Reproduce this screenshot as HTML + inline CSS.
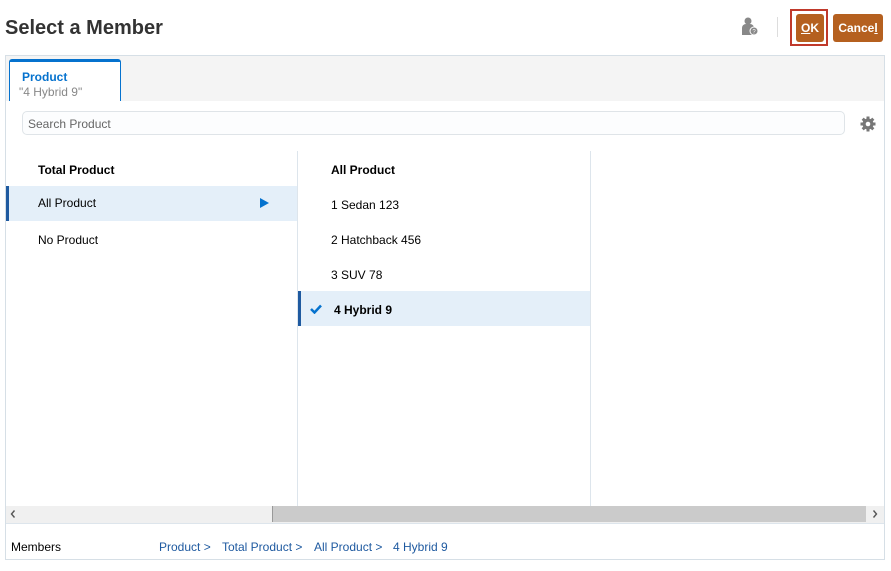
<!DOCTYPE html>
<html><head><style>
*{margin:0;padding:0;box-sizing:border-box}
body{width:891px;height:571px;background:#fff;font-family:"Liberation Sans",Arial,sans-serif;position:relative;overflow:hidden;color:#000}
.a{position:absolute}
.t{font-size:12px;white-space:nowrap}
.b{color:#1f5aa0}
</style></head><body>
<div class="a" style="left:5px;top:17px;font-size:20px;font-weight:bold;color:#333">Select a Member</div>
<svg class="a" style="left:741px;top:17px" width="19" height="20" viewBox="0 0 19 20"><circle cx="7" cy="4" r="3.5" fill="#888"/><path d="M1 18V11a4 4 0 0 1 4-4h4a4 4 0 0 1 4 4v7z" fill="#888"/><circle cx="13" cy="14" r="4.5" fill="#fff"/><circle cx="13" cy="14" r="3.5" fill="#888"/><text x="13" y="16.5" font-size="6" fill="#fff" text-anchor="middle" font-family="Liberation Sans">?</text></svg>
<div class="a" style="left:777px;top:17px;width:1px;height:20px;background:#ddd"></div>
<div class="a" style="left:790px;top:9px;width:38px;height:37px;border:2px solid #c0392b"></div>
<div class="a" style="left:796px;top:14px;width:28px;height:28px;background:#b5601f;border-radius:3px;color:#fff;font-weight:bold;font-size:12px;text-align:center;line-height:28px"><u>O</u>K</div>
<div class="a" style="left:833px;top:14px;width:50px;height:28px;background:#b5601f;border-radius:3px;color:#fff;font-weight:bold;font-size:12px;text-align:center;line-height:28px">Cance<u>l</u></div>
<div class="a" style="left:5px;top:55px;width:880px;height:505px;border:1px solid #d6dfe6"></div>
<div class="a" style="left:6px;top:56px;width:878px;height:45px;background:#f4f4f4"></div>
<div class="a" style="left:9px;top:59px;width:112px;height:42px;background:#fff;border:1px solid #0572ce;border-top:3px solid #0572ce;border-bottom:none;border-radius:3px 3px 0 0"></div>
<div class="a t" style="left:22px;top:70px;color:#0572ce;font-weight:bold">Product</div>
<div class="a t" style="left:19px;top:85px;color:#888">"4 Hybrid 9"</div>
<div class="a" style="left:22px;top:111px;width:823px;height:24px;border:1px solid #dfe4e8;border-radius:5px;background:#fcfdfe"></div>
<div class="a t" style="left:28px;top:117px;color:#666">Search Product</div>
<svg class="a" style="left:860px;top:116px" width="16" height="16" viewBox="0 0 16 16"><g fill="#777"><circle cx="8" cy="8" r="5.5"/><rect x="6.5" y="0.5" width="3" height="15"/><rect x="0.5" y="6.5" width="15" height="3"/><rect x="6.5" y="0.5" width="3" height="15" transform="rotate(45 8 8)"/><rect x="6.5" y="0.5" width="3" height="15" transform="rotate(-45 8 8)"/></g><circle cx="8" cy="8" r="2.3" fill="#fff"/></svg>
<div class="a" style="left:297px;top:151px;width:1px;height:355px;background:#dde5ec"></div>
<div class="a" style="left:590px;top:151px;width:1px;height:355px;background:#dde5ec"></div>
<div class="a t" style="left:38px;top:163px;font-weight:bold">Total Product</div>
<div class="a" style="left:6px;top:186px;width:291px;height:35px;background:#e4eff9;border-left:3px solid #1f5aa0"></div>
<div class="a t" style="left:38px;top:196px">All Product</div>
<div class="a" style="left:260px;top:198px;width:0;height:0;border-top:5px solid transparent;border-bottom:5px solid transparent;border-left:9px solid #0572ce"></div>
<div class="a t" style="left:38px;top:233px">No Product</div>
<div class="a t" style="left:331px;top:163px;font-weight:bold">All Product</div>
<div class="a t" style="left:331px;top:198px">1 Sedan 123</div>
<div class="a t" style="left:331px;top:233px">2 Hatchback 456</div>
<div class="a t" style="left:331px;top:268px">3 SUV 78</div>
<div class="a" style="left:298px;top:291px;width:292px;height:35px;background:#e4eff9;border-left:3px solid #1f5aa0"></div>
<svg class="a" style="left:310px;top:304px" width="12" height="10" viewBox="0 0 12 10"><path d="M1 5l3.5 3.5L11 1.5" stroke="#0572ce" stroke-width="2.5" fill="none"/></svg>
<div class="a t" style="left:334px;top:303px;font-weight:bold">4 Hybrid 9</div>
<div class="a" style="left:6px;top:506px;width:878px;height:17px;background:#f0f0f0"></div>
<div class="a" style="left:272px;top:506px;width:594px;height:16px;background:#cbcbcb;border-left:1px solid #999"></div>
<svg class="a" style="left:9px;top:509px" width="8" height="10" viewBox="0 0 8 10"><path d="M5.5 1.5L2.5 5l3 3.5" stroke="#555" stroke-width="1.4" fill="none"/></svg>
<svg class="a" style="left:871px;top:509px" width="8" height="10" viewBox="0 0 8 10"><path d="M2.5 1.5L5.5 5l-3 3.5" stroke="#555" stroke-width="1.4" fill="none"/></svg>
<div class="a" style="left:6px;top:523px;width:878px;height:1px;background:#dde5ec"></div>
<div class="a t" style="left:11px;top:540px">Members</div>
<div class="a t b" style="left:159px;top:540px">Product &gt;</div>
<div class="a t b" style="left:222px;top:540px">Total Product &gt;</div>
<div class="a t b" style="left:314px;top:540px">All Product &gt;</div>
<div class="a t b" style="left:393px;top:540px">4 Hybrid 9</div>
</body></html>
